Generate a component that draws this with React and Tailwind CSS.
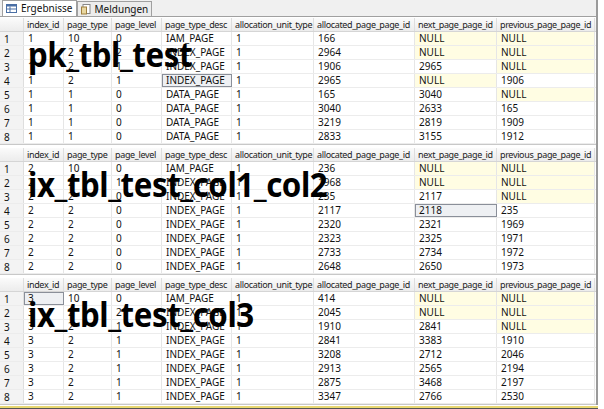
import React from "react";

const cols = [
  ["", 24],
  ["index_id", 40],
  ["page_type", 48],
  ["page_level", 50],
  ["page_type_desc", 70],
  ["allocation_unit_type", 82],
  ["allocated_page_page_id", 101],
  ["next_page_page_id", 82],
  ["previous_page_page_id", 98],
];

const grids = [
  {
    label: "pk_tbl_test",
    rows: [
      ["1", "10", "0", "IAM_PAGE", "1", "166", "NULL", "NULL"],
      ["1", "2", "2", "INDEX_PAGE", "1", "2964", "NULL", "NULL"],
      ["1", "2", "1", "INDEX_PAGE", "1", "1906", "2965", "NULL"],
      ["1", "2", "1", "INDEX_PAGE", "1", "2965", "NULL", "1906"],
      ["1", "1", "0", "DATA_PAGE", "1", "165", "3040", "NULL"],
      ["1", "1", "0", "DATA_PAGE", "1", "3040", "2633", "165"],
      ["1", "1", "0", "DATA_PAGE", "1", "3219", "2819", "1909"],
      ["1", "1", "0", "DATA_PAGE", "1", "2833", "3155", "1912"],
    ],
    sel: [3, 3],
  },
  {
    label: "ix_tbl_test_col1_col2",
    rows: [
      ["2", "10", "0", "IAM_PAGE", "1", "236", "NULL", "NULL"],
      ["2", "2", "1", "INDEX_PAGE", "1", "1968", "NULL", "NULL"],
      ["2", "2", "0", "INDEX_PAGE", "1", "235", "2117", "NULL"],
      ["2", "2", "0", "INDEX_PAGE", "1", "2117", "2118", "235"],
      ["2", "2", "0", "INDEX_PAGE", "1", "2320", "2321", "1969"],
      ["2", "2", "0", "INDEX_PAGE", "1", "2323", "2325", "1971"],
      ["2", "2", "0", "INDEX_PAGE", "1", "2733", "2734", "1972"],
      ["2", "2", "0", "INDEX_PAGE", "1", "2648", "2650", "1973"],
    ],
    sel: [3, 6],
  },
  {
    label: "ix_tbl_test_col3",
    rows: [
      ["3", "10", "0", "IAM_PAGE", "1", "414", "NULL", "NULL"],
      ["3", "2", "2", "INDEX_PAGE", "1", "2045", "NULL", "NULL"],
      ["3", "2", "1", "INDEX_PAGE", "1", "1910", "2841", "NULL"],
      ["3", "2", "1", "INDEX_PAGE", "1", "2841", "3383", "1910"],
      ["3", "2", "1", "INDEX_PAGE", "1", "3208", "2712", "2046"],
      ["3", "2", "1", "INDEX_PAGE", "1", "2913", "2565", "2194"],
      ["3", "2", "1", "INDEX_PAGE", "1", "2875", "3468", "2197"],
      ["3", "2", "1", "INDEX_PAGE", "1", "3347", "2766", "2530"],
    ],
    sel: [0, 0],
  },
];

function Grid({ g }) {
  return (
    <div className="relative border-b border-[#c8c8c8]">
      <div className="flex h-[14px] bg-gradient-to-b from-[#fbfbfb] to-[#ececec] border-b border-[#d5d5d5]">
        {cols.map(([c, w], i) => (
          <div key={i} style={{ width: w }} className="shrink-0 pl-[3px] leading-[14px] text-[9px] tracking-[-0.35px] text-[#222] border-r border-[#dedede] overflow-hidden whitespace-nowrap">
            {c}
          </div>
        ))}
      </div>
      {g.rows.map((r, ri) => (
        <div key={ri} className="flex h-[14px] border-b border-[#ececec]">
          <div className="w-[24px] shrink-0 bg-[#f3f3f3] pl-[4px] leading-[14px] border-r border-[#dedede]">{ri + 1}</div>
          {r.map((v, ci) => {
            const sel = g.sel[0] === ri && g.sel[1] === ci;
            return (
              <div
                key={ci}
                style={{ width: cols[ci + 1][1] }}
                className={
                  "shrink-0 pl-[4px] leading-[13px] border-r border-[#e6e6e6] " +
                  (sel ? "bg-[#eef0f3] outline outline-1 outline-[#8a8f99] -outline-offset-1 " : v === "NULL" ? "bg-[#fffde3] " : "")
                }
              >
                {v}
              </div>
            );
          })}
        </div>
      ))}
      <div className="absolute left-[28px] top-[19px] text-[34px] font-bold leading-none tracking-[-0.5px] text-black font-['Open_Sans','Liberation_Sans',sans-serif] scale-x-[0.92] origin-left">
        {g.label}
      </div>
    </div>
  );
}

export default function App() {
  return (
    <div className="w-[604px] h-[409px] bg-white font-['Liberation_Sans',Arial,sans-serif] text-[10px] text-[#111] overflow-hidden">
      <div className="w-[598px] border-r-2 border-[#9a9a9a]">
        <div className="flex h-[17px] bg-[#f0f0f0] border-b border-[#a0a0a0] items-end pl-[2px]">
          <div className="flex items-center gap-[4px] h-[16px] px-[3px] bg-white border border-b-0 border-[#a0a0a0] text-[10px]">
            <svg width="11" height="9" viewBox="0 0 11 9"><rect x="0.5" y="0.5" width="10" height="8" fill="#fff" stroke="#4a6fa5" /><rect x="0.5" y="0.5" width="10" height="2" fill="#4a6fa5" /><path d="M0.5 5h10M4 2.5v6" stroke="#4a6fa5" /></svg>
            Ergebnisse
          </div>
          <div className="flex items-center gap-[4px] h-[15px] px-[3px] bg-[#ececec] border border-b-0 border-[#a0a0a0] text-[10px]">
            <svg width="10" height="11" viewBox="0 0 10 11"><rect x="2" y="0.5" width="7" height="9" fill="#fff" stroke="#888" /><rect x="0.5" y="3" width="5" height="7" fill="#e8d7a0" stroke="#a08040" /></svg>
            Meldungen
          </div>
        </div>
        <div className="pt-[1px] flex flex-col gap-[3px]">
          {grids.map((g, i) => (
            <Grid key={i} g={g} />
          ))}
        </div>
      </div>
      <div className="w-[598px] h-[2px] bg-[#e8d872] mt-[1px]" />
      <div className="w-[598px] h-[2px] bg-[#555]" />
    </div>
  );
}
